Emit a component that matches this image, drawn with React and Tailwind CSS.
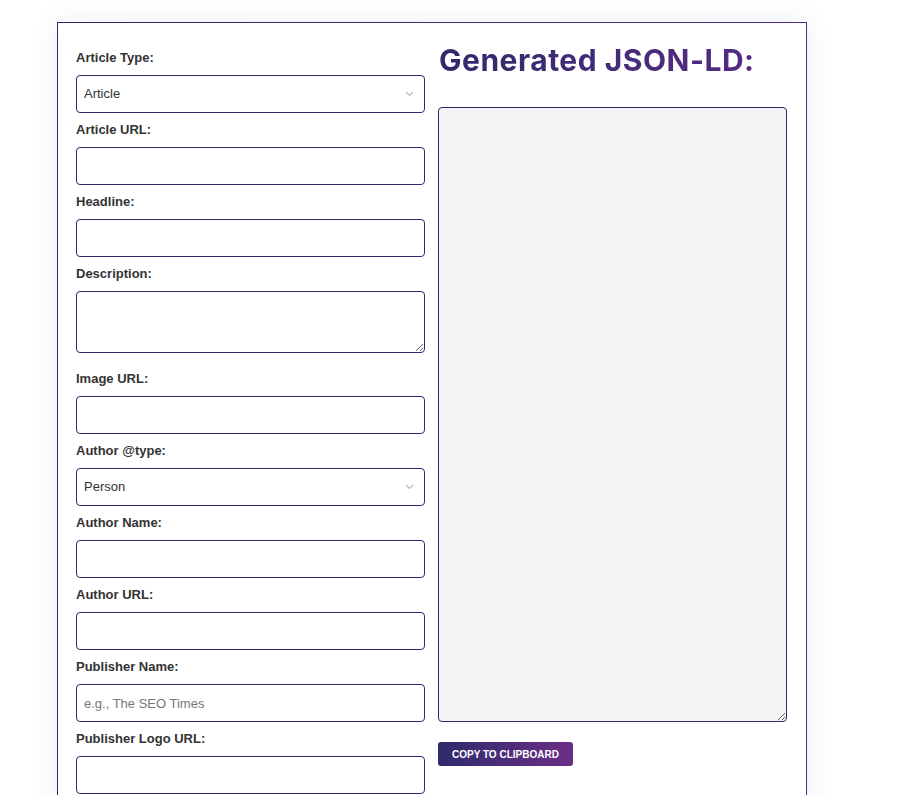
import React from "react";

const labelCls = "block text-[13px] leading-5 font-bold text-[#333] mb-[7px]";
const inputCls =
  "block w-full h-[38px] rounded-[4px] border border-[#2c2a6b] bg-white px-[7px] text-[13px] text-[#333] placeholder:text-[#777] outline-none";

function Field({ label, children, extra = "" }) {
  return (
    <div className={"mb-[7px] " + extra}>
      <label className={labelCls}>{label}</label>
      {children}
    </div>
  );
}

function Select({ value }) {
  return (
    <div className="relative">
      <select className={inputCls + " appearance-none"} defaultValue={value}>
        <option>{value}</option>
      </select>
      <svg
        className="pointer-events-none absolute right-[11px] top-1/2 -translate-y-1/2"
        width="9"
        height="6"
        viewBox="0 0 9 6"
        fill="none"
      >
        <path d="M1 1l3.5 3.5L8 1" stroke="#bbb" strokeWidth="1.2" />
      </svg>
    </div>
  );
}

export default function App() {
  return (
    <div
      className="min-h-[795px] bg-white pt-[22px] pl-[57px]"
      style={{ fontFamily: "'Liberation Sans', Arial, sans-serif" }}
    >
      <div className="w-[750px] p-px bg-gradient-to-r from-[#2e2a6b] to-[#4c2a88] shadow-[0_0_24px_rgba(90,70,160,0.10)]">
        <div className="bg-white pt-[25px] pb-[40px] px-[18px] grid grid-cols-2 gap-[14px]">
          <div>
            <Field label="Article Type:">
              <Select value="Article" />
            </Field>
            <Field label="Article URL:">
              <input className={inputCls} />
            </Field>
            <Field label="Headline:">
              <input className={inputCls} />
            </Field>
            <Field label="Description:" extra="mb-[16px]">
              <textarea
                rows={3}
                className="block w-full h-[62px] rounded-[4px] border border-[#2c2a6b] bg-white px-[7px] text-[13px] outline-none"
              />
            </Field>
            <Field label="Image URL:">
              <input className={inputCls} />
            </Field>
            <Field label="Author @type:">
              <Select value="Person" />
            </Field>
            <Field label="Author Name:">
              <input className={inputCls} />
            </Field>
            <Field label="Author URL:">
              <input className={inputCls} />
            </Field>
            <Field label="Publisher Name:">
              <input className={inputCls} placeholder="e.g., The SEO Times" />
            </Field>
            <Field label="Publisher Logo URL:">
              <input className={inputCls} />
            </Field>
          </div>
          <div>
            <h2
              className="-mt-[8px] text-[30px] leading-[40px] font-bold tracking-[0.5px] bg-gradient-to-r from-[#2e2a6b] to-[#5a2b86] bg-clip-text text-transparent"
              style={{ fontFamily: "Inter, 'Liberation Sans', sans-serif" }}
            >
              Generated JSON-LD:
            </h2>
            <textarea
              readOnly
              className="block mt-[27px] -ml-px w-full h-[615px] rounded-[4px] border border-[#2c2a6b] bg-[#f4f4f4] outline-none"
            />
            <button className="mt-[20px] -ml-px h-[24px] px-[14px] rounded-[3px] bg-gradient-to-r from-[#2e2a6b] to-[#6b2d86] text-white text-[10px] font-bold tracking-[0px] uppercase">
              Copy to Clipboard
            </button>
          </div>
        </div>
      </div>
    </div>
  );
}
